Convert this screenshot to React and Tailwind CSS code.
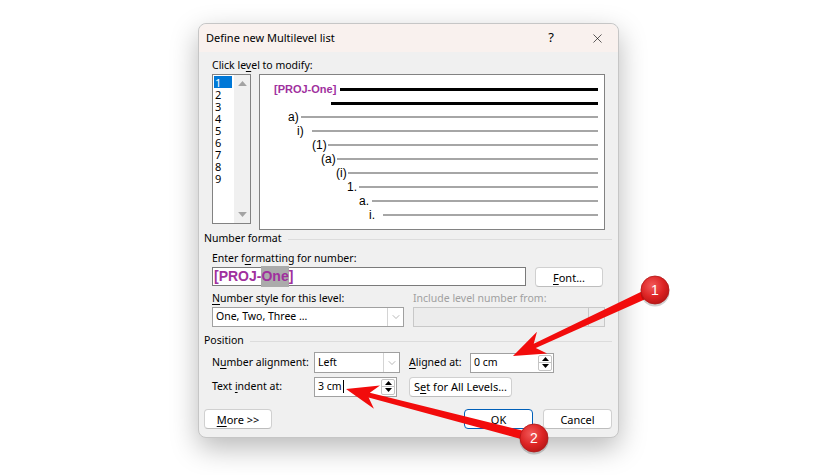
import React from 'react'
import { X, ChevronDown } from 'lucide-react'

// preview rows: x of label and x where the rule starts (relative to inner box)
const previewRows = [
    { label: '[PROJ-One]', text: 14, line: 80, top: true },
    { label: '', text: 71, line: 71, top: true },
    { label: 'a)', text: 28, line: 41 },
    { label: 'i)', text: 37, line: 52 },
    { label: '(1)', text: 52, line: 68 },
    { label: '(a)', text: 61, line: 77 },
    { label: '(i)', text: 76, line: 88 },
    { label: '1.', text: 87, line: 99 },
    { label: 'a.', text: 99, line: 112 },
    { label: 'i.', text: 109, line: 123 },
]

const U = ({ children }) => <span className="underline underline-offset-[2px]">{children}</span>

const Btn = ({ children, w, primary }) => (
    <button className={`flex h-[20px] items-center justify-center rounded-[4px] bg-white text-[11px] leading-none ${primary ? 'border border-[#005fb8]' : 'border border-[#d0d0d0] border-b-[#bdbdbd]'} ${w}`}>
        {children}
    </button>
)

const Tri = ({ up, color = '#000', w = 7, h = 4 }) => (
    <svg width={w} height={h} viewBox="0 0 7 4">
        <path d={up ? 'M0 4 L3.5 0 L7 4Z' : 'M0 0 L3.5 4 L7 0Z'} fill={color} />
    </svg>
)

const Spin = ({ value, w, caret }) => (
    <div className={`flex h-[20px] border border-[#a0a0a0] bg-white ${w}`}>
        <div className="flex flex-1 items-center pl-[3px]">
            {value}
            {caret && <span className="ml-[1px] inline-block h-[13px] w-[1px] bg-black"></span>}
        </div>
        <div className="my-[1px] mr-[1px] flex w-[14px] flex-col rounded-[2px] border border-[#c4c4c4]">
            <div className="flex flex-1 items-center justify-center border-b border-[#c4c4c4]"><Tri up /></div>
            <div className="flex flex-1 items-center justify-center"><Tri /></div>
        </div>
    </div>
)

const Select = ({ value, w, h = 'h-[20px]', disabled }) => (
    <div className={`flex border ${h} ${w} ${disabled ? 'border-[#c8c8c8] bg-[#ececec]' : 'border-[#a0a0a0] bg-white'}`}>
        <div className="flex flex-1 items-center pl-[3px]">{value}</div>
        <div className={`flex w-[16px] items-center justify-center border-l ${disabled ? 'border-[#c8c8c8]' : 'border-[#d4d4d4]'}`}>
            <ChevronDown size={12} strokeWidth={1} color={disabled ? '#b0b0b0' : '#707070'} />
        </div>
    </div>
)

const GroupHead = ({ children }) => (
    <div className="flex h-[16px] items-center">
        <span>{children}</span>
        <div className="ml-[6px] h-[1px] flex-1 bg-[#dcdcdc]"></div>
    </div>
)

// red annotation arrow, tail at the badge, tip at the target
const arrowPoints = (x1, y1, x2, y2) => {
    const dx = x2 - x1, dy = y2 - y1
    const len = Math.hypot(dx, dy)
    const ux = dx / len, uy = dy / len
    const px = -uy, py = ux
    const at = (d, off) => [x2 - ux * d + px * off, y2 - uy * d + py * off]
    const pts = [
        [x1 + px * 4.5, y1 + py * 4.5],
        at(24, 2.4),
        at(32, 12),
        [x2, y2],
        at(32, -12),
        at(24, -2.4),
        [x1 - px * 4.5, y1 - py * 4.5],
    ]
    return pts.map(p => p.join(',')).join(' ')
}

const Badge = ({ cx, cy, n }) => (
    <g>
        <circle cx={cx} cy={cy + 2} r="14.5" fill="rgba(0,0,0,0.18)" />
        <circle cx={cx} cy={cy} r="14" fill="url(#badge)" stroke="#b01818" strokeWidth="0.8" />
        <text x={cx} y={cy + 5} textAnchor="middle" fontSize="14" fill="#fff" fontFamily="Liberation Sans, Arial, sans-serif">{n}</text>
    </g>
)

const App = () => {
    return (
        <div className="relative h-[475px] w-[825px] overflow-hidden bg-white pl-[198px] pt-[23px] font-['Noto_Sans',sans-serif] text-[10.5px] text-black">
            <div className="w-[421px] rounded-[8px] border border-[#c6c6c6] bg-[#f0f0f0] shadow-[0_10px_28px_rgba(0,0,0,0.28)]">
                {/* title bar */}
                <div className="flex h-[28px] items-center rounded-t-[8px] bg-[#f9f1ee] pl-[7px] text-[11px]">
                    <span className="flex-1">Define new Multilevel list</span>
                    <span className="flex w-[40px] justify-center text-[13px]">?</span>
                    <span className="ml-[6px] mr-[1px] flex w-[40px] justify-center"><X size={15} strokeWidth={1} /></span>
                </div>

                <div className="pb-[8px] pl-[5px] pr-[6px]">
                    <div className="pl-[8px] pt-[5px]">
                        <div className="h-[16px] leading-[16px]">Click le<U>v</U>el to modify:</div>
                        <div className="mt-[1px] flex gap-[8px] pr-[7px]">
                            <div className="flex h-[150px] w-[39px] border border-[#828282] bg-white">
                                <div className="w-[21px] pl-[1px] pt-[1px] text-[11px]">
                                    {[1, 2, 3, 4, 5, 6, 7, 8, 9].map(n => (
                                        <div key={n} className={`flex h-[12px] w-[18px] items-center overflow-hidden pl-[1px] leading-[11px] ${n === 1 ? 'bg-[#0078d7] text-white' : ''}`}>{n}</div>
                                    ))}
                                </div>
                                <div className="flex w-[16px] flex-col items-center justify-between bg-[#f0f0f0] py-[6px]">
                                    <Tri up color="#a3a3a3" w={9} h={5} />
                                    <Tri color="#a3a3a3" w={9} h={5} />
                                </div>
                            </div>
                            <div className="h-[156px] flex-1 border border-[#828282] bg-white pr-[6px] pt-[7px] font-['Liberation_Sans',Arial,sans-serif] text-[12px]">
                                {previewRows.map((r, i) => (
                                    <div key={i} className="flex h-[14px] items-center" style={{ paddingLeft: r.text }}>
                                        <span className={`shrink-0 whitespace-nowrap ${r.label.startsWith('[') ? 'text-[11px] font-bold text-[#a0309e]' : ''}`} style={{ width: r.line - r.text }}>{r.label}</span>
                                        <div className={`flex-1 ${r.top ? 'h-[3px] bg-black' : 'h-[2px] bg-[#a6a6a6]'}`}></div>
                                    </div>
                                ))}
                            </div>
                        </div>
                    </div>

                    <div className="mt-[1px]"><GroupHead>Number format</GroupHead></div>
                    <div className="pl-[8px] pr-[7px]">
                        <div className="mt-[3px] h-[16px] leading-[16px]">Enter f<U>o</U>rmatting for number:</div>
                        <div className="mt-[1px] flex gap-[9px]">
                            <div className="flex h-[19px] w-[314px] items-center border border-[#7a7a7a] bg-white pl-[1px] font-['Liberation_Sans',Arial,sans-serif] text-[14px] font-bold text-[#a0309e]">
                                [PROJ-<span className="bg-[#ababab]">One</span>]
                            </div>
                            <Btn w="w-[68px]"><U>F</U>ont...</Btn>
                        </div>
                        <div className="mt-[3px] flex h-[16px] leading-[16px]">
                            <span className="w-[201px]"><U>N</U>umber style for this level:</span>
                            <span className="text-[#a0a0a0]">Include level number from:</span>
                        </div>
                        <div className="mt-[1px] flex gap-[9px]">
                            <Select value="One, Two, Three ..." w="w-[192px]" />
                            <Select value="" w="w-[192px]" disabled />
                        </div>
                    </div>

                    <div className="mt-[6px]"><GroupHead>Position</GroupHead></div>
                    <div className="pl-[8px] pr-[7px]">
                        <div className="mt-[3px] flex h-[21px] items-center">
                            <span className="w-[102px]">N<U>u</U>mber alignment:</span>
                            <Select value="Left" w="w-[86px]" h="h-[21px]" />
                            <span className="ml-[9px] w-[61px]"><U>A</U>ligned at:</span>
                            <Spin value="0 cm" w="w-[84px]" />
                        </div>
                        <div className="mt-[3px] flex h-[21px] items-center">
                            <span className="w-[102px]">Text <U>i</U>ndent at:</span>
                            <Spin value="3 cm" w="w-[83px]" caret />
                            <div className="ml-[12px]"><Btn w="w-[103px]">S<U>e</U>t for All Levels...</Btn></div>
                        </div>
                    </div>

                    <div className="mt-[12px] flex">
                        <Btn w="w-[68px]"><U>M</U>ore &gt;&gt;</Btn>
                        <div className="ml-auto flex gap-[10px]">
                            <Btn w="w-[69px]" primary>OK</Btn>
                            <Btn w="w-[69px]">Cancel</Btn>
                        </div>
                    </div>
                </div>
            </div>

            {/* annotation overlay */}
            <svg className="pointer-events-none absolute inset-0" width="825" height="475">
                <defs>
                    <radialGradient id="badge" cx="0.4" cy="0.35" r="0.7">
                        <stop offset="0" stopColor="#f25a5a" />
                        <stop offset="0.6" stopColor="#dc2323" />
                        <stop offset="1" stopColor="#b51616" />
                    </radialGradient>
                </defs>
                <polygon points={arrowPoints(655, 290, 513, 356)} fill="#f20c0c" />
                <polygon points={arrowPoints(534, 438, 346, 389)} fill="#f20c0c" />
                <Badge cx={655} cy={290} n="1" />
                <Badge cx={534} cy={438} n="2" />
            </svg>
        </div>
    )
}

export default App
